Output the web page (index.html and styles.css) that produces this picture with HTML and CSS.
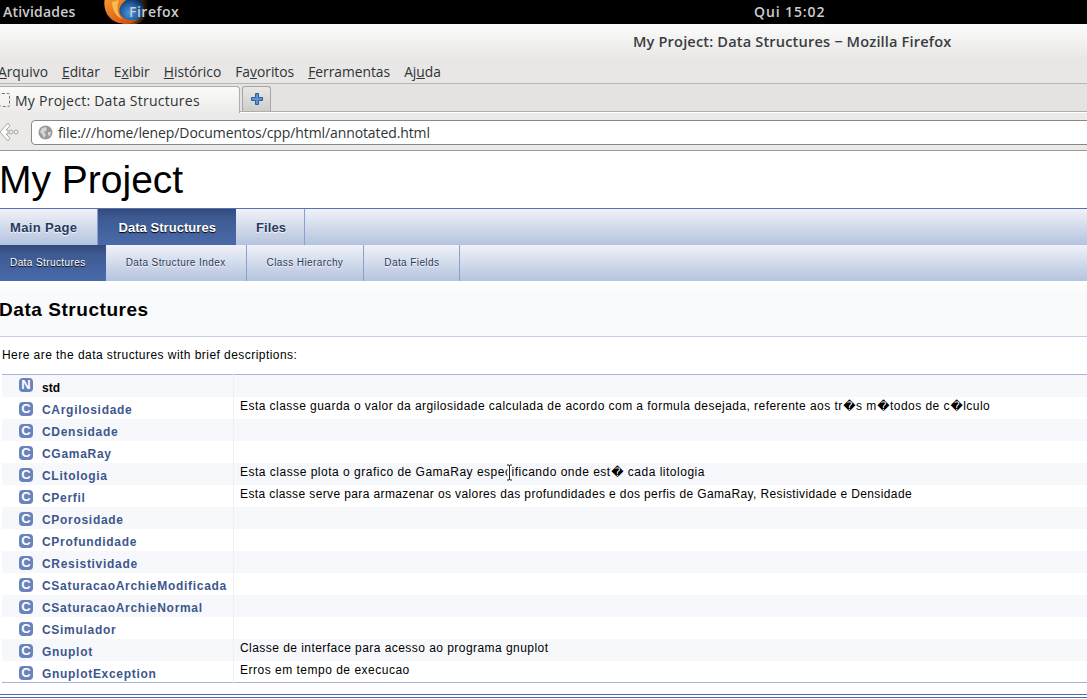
FILE: index.html
```html
<!DOCTYPE html>
<html>
<head>
<meta charset="utf-8">
<title>My Project: Data Structures</title>
<link rel="stylesheet" href="styles.css">
</head>
<body>
	<div class="shell-bar">
		<span class="shell-activities">Atividades</span>
		<span class="shell-app">
			<svg class="fox-icon" width="46" height="24" viewBox="0 0 46 24">
				<defs>
					<radialGradient id="globe" cx="0.45" cy="0.65" r="0.6">
						<stop offset="0" stop-color="#4a9ade"/>
						<stop offset="0.7" stop-color="#1a4f90"/>
						<stop offset="1" stop-color="#0c2748"/>
					</radialGradient>
					<linearGradient id="fade" x1="0" x2="1" y1="0" y2="0">
						<stop offset="0.4" stop-color="#a8651a"/>
						<stop offset="1" stop-color="#000"/>
					</linearGradient>
					<linearGradient id="swirl" x1="0" x2="1" y1="0" y2="1">
						<stop offset="0" stop-color="#f49a2c"/>
						<stop offset="1" stop-color="#d2440f"/>
					</linearGradient>
				</defs>
				<circle cx="26" cy="6" r="19" fill="url(#fade)"/>
				<circle cx="27" cy="9" r="13" fill="url(#globe)"/>
				<path d="M1 -2 C-2 10 5 23 19 23.500 C26 24 31 22 34 19 C26 22 19 19 16 14 C14 9 17 4 22 0 L22 -2Z" fill="url(#swirl)"/>
				<path d="M8 2 C8 10 12 16 18 19 C14 14 12 8 15 0Z" fill="#f6bd4e"/>
			</svg>
			<span class="shell-app-name">Firefox</span>
		</span>
		<span class="shell-clock">Qui 15:02</span>
	</div>
	<div class="title-bar">My Project: Data Structures − Mozilla Firefox</div>
	<div class="menu-bar">
		<span><u>A</u>rquivo</span>
		<span><u>E</u>ditar</span>
		<span>E<u>x</u>ibir</span>
		<span><u>H</u>istórico</span>
		<span>Fa<u>v</u>oritos</span>
		<span><u>F</u>erramentas</span>
		<span>Aj<u>u</u>da</span>
	</div>
	<div class="tab-bar">
		<div class="tab">
			<span class="tab-favicon"></span>
			My Project: Data Structures
		</div>
		<div class="tab-new">
			<svg width="14" height="14" viewBox="0 0 14 14">
				<path d="M5.500 1.500h3v4h4v3h-4v4h-3v-4h-4v-3h4z" fill="#5b93cf" stroke="#2a5f9e"/>
			</svg>
		</div>
	</div>
	<div class="nav-bar">
		<svg class="back-icon" width="20" height="20" viewBox="0 0 20 20">
			<path d="M8 1 L0 10 L8 19 L10 16 L6 12 H8 V8 H6 L10 4Z" fill="#fbfbfa" stroke="#a9a9a6"/>
			<circle cx="11" cy="10" r="2" fill="#f0f0ee" stroke="#a5a5a2"/>
			<circle cx="16" cy="10" r="2" fill="#f0f0ee" stroke="#a5a5a2"/>
		</svg>
		<div class="url-box">
			<svg class="globe" width="15" height="15" viewBox="0 0 15 15">
				<circle cx="7.500" cy="7.500" r="7" fill="#9a9a9a"/>
				<path d="M4 3 L8 2 L9 5 L6 7 L8 10 L6 13 L4 9 L2 7Z M10 7 L13 7 L12 11 L10 10Z" fill="#d6d6d6"/>
			</svg>
			file:///home/lenep/Documentos/cpp/html/annotated.html
		</div>
	</div>

	<div class="project-name">My Project</div>

	<div class="tabs">
		<a class="tabs-item">Main Page</a>
		<a class="tabs-item tabs-current">Data Structures</a>
		<a class="tabs-item tabs-files">Files</a>
	</div>
	<div class="tabs2">
		<a class="tabs2-item tabs2-current">Data Structures</a>
		<a class="tabs2-item">Data Structure Index</a>
		<a class="tabs2-item">Class Hierarchy</a>
		<a class="tabs2-item">Data Fields</a>
	</div>

	<div class="header">
		<h1 class="headertitle">Data Structures</h1>
	</div>

	<div class="contents">
		<p class="intro">Here are the data structures with brief descriptions:</p>
		<table class="directory">
			<tr class="even"><td class="entry"><span class="icon icon-ns">N</span><b class="ns">std</b></td><td class="desc"></td></tr>
			<tr><td class="entry"><span class="icon">C</span><a class="el">CArgilosidade</a></td><td class="desc">Esta classe guarda o valor da argilosidade calculada de acordo com a formula desejada, referente aos tr<i class="bad">�</i>s m<i class="bad">�</i>todos de c<i class="bad">�</i>lculo</td></tr>
			<tr class="even"><td class="entry"><span class="icon">C</span><a class="el">CDensidade</a></td><td class="desc"></td></tr>
			<tr><td class="entry"><span class="icon">C</span><a class="el">CGamaRay</a></td><td class="desc"></td></tr>
			<tr class="even"><td class="entry"><span class="icon">C</span><a class="el">CLitologia</a></td><td class="desc desc-wide">Esta classe plota o grafico de GamaRay espe<span class="cursor-wrap">c<svg class="text-cursor" width="7" height="17" viewBox="0 0 7 17"><path d="M3.500 1v15" fill="none" stroke="#fff" stroke-width="4"/><path d="M1 1h2l.5 1 .5-1h2M3.500 2v13M1 16h2l.5-1 .5 1h2" fill="none" stroke="#222" stroke-width="1"/></svg></span>ificando onde est<i class="bad">�</i> cada litologia</td></tr>
			<tr><td class="entry"><span class="icon">C</span><a class="el">CPerfil</a></td><td class="desc desc-tight">Esta classe serve para armazenar os valores das profundidades e dos perfis de GamaRay, Resistividade e Densidade</td></tr>
			<tr class="even"><td class="entry"><span class="icon">C</span><a class="el">CPorosidade</a></td><td class="desc"></td></tr>
			<tr><td class="entry"><span class="icon">C</span><a class="el">CProfundidade</a></td><td class="desc"></td></tr>
			<tr class="even"><td class="entry"><span class="icon">C</span><a class="el">CResistividade</a></td><td class="desc"></td></tr>
			<tr><td class="entry"><span class="icon">C</span><a class="el">CSaturacaoArchieModificada</a></td><td class="desc"></td></tr>
			<tr class="even"><td class="entry"><span class="icon">C</span><a class="el">CSaturacaoArchieNormal</a></td><td class="desc"></td></tr>
			<tr><td class="entry"><span class="icon">C</span><a class="el">CSimulador</a></td><td class="desc"></td></tr>
			<tr class="even"><td class="entry"><span class="icon">C</span><a class="el">Gnuplot</a></td><td class="desc">Classe de interface para acesso ao programa gnuplot</td></tr>
			<tr><td class="entry"><span class="icon">C</span><a class="el">GnuplotException</a></td><td class="desc desc-wide">Erros em tempo de execucao</td></tr>
		</table>
	</div>
	<div class="footer-line"></div>
</body>
</html>
```

FILE: styles.css
```css
html, body {
	margin: 0;
	padding: 0;
	height: 699px;
	overflow: hidden;
	background: white;
	font-family: "Liberation Sans", sans-serif;
}

/* desktop bars */
.shell-bar {
	height: 24px;
	background: black;
	color: #ccc;
	font-family: "Open Sans", sans-serif;
	font-size: 14px;
	font-weight: 600;
	line-height: 23px;
	display: flex;
	position: relative;
}
.shell-activities {
	margin-left: 3px;
	width: 101px;
	letter-spacing: 0.2px;
}
.shell-app {
	display: flex;
}
.fox-icon {
	flex: none;
}
.shell-app-name {
	margin-left: -21px;
	letter-spacing: 0.5px;
}
.shell-clock {
	position: absolute;
	left: 754px;
	top: 0;
	letter-spacing: 0.9px;
}
.title-bar {
	height: 36px;
	box-sizing: border-box;
	padding-left: 633px;
	padding-top: 7px;
	background: linear-gradient(#fbfbfb, #e8e7e5);
	color: #3a3d40;
	font-family: "Open Sans", sans-serif;
	font-size: 14.6px;
	font-weight: 600;
	letter-spacing: 0.15px;
	line-height: 20px;
}
.menu-bar {
	height: 24px;
	background: #e8e7e5;
	border-bottom: 1px solid #b8b6b2;
	box-sizing: border-box;
	display: flex;
	gap: 14px;
	color: #2e3436;
	font-family: "Open Sans", sans-serif;
	font-size: 13.8px;
	line-height: 23px;
}
.menu-bar span:first-child {
	margin-left: -2px;
}
.tab-bar {
	height: 28px;
	box-sizing: border-box;
	background: #e4e3e1;
	border-bottom: 1px solid #b0aeaa;
	display: flex;
	padding-top: 2px;
}
.tab {
	width: 240px;
	height: 27px;
	box-sizing: border-box;
	background: linear-gradient(#fbfbfa, #ecebe9);
	border: 1px solid #b0aeaa;
	border-left: 0;
	border-bottom: 0;
	border-radius: 0 4px 0 0;
	color: #2e3436;
	font-family: "Open Sans", sans-serif;
	font-size: 14px;
	letter-spacing: 0.25px;
	line-height: 25px;
	display: flex;
	align-items: center;
	gap: 5px;
}
.tab-favicon {
	width: 9px;
	height: 12px;
	border: 1px dashed #777;
	border-left: 0;
	border-radius: 2px;
}
.tab-new {
	width: 29px;
	height: 25px;
	margin-left: 2px;
	box-sizing: border-box;
	background: linear-gradient(#e9e8e6, #cfcdca);
	border: 1px solid #a6a4a0;
	border-bottom: 0;
	border-radius: 3px 3px 0 0;
	display: flex;
	align-items: center;
	justify-content: center;
}
.nav-bar {
	height: 39px;
	box-sizing: border-box;
	background: #ebeae8;
	border-top: 1px solid #fff;
	border-bottom: 1px solid #9a9894;
	display: flex;
	align-items: flex-start;
	padding-top: 7px;
}
.back-icon {
	margin-top: 2px;
	flex: none;
}
.url-box {
	flex: 1;
	margin-left: 11px;
	margin-right: -6px;
	height: 25px;
	box-sizing: border-box;
	background: white;
	border: 1px solid #8a8884;
	border-radius: 4px;
	padding-left: 6px;
	display: flex;
	align-items: center;
	gap: 5px;
	color: #2e3436;
	font-family: "Open Sans", sans-serif;
	font-size: 14px;
	letter-spacing: -0.1px;
}

/* doxygen page */
.project-name {
	height: 57px;
	margin-left: -1px;
	font-size: 39px;
	line-height: 58px;
	color: black;
}
.tabs {
	height: 37px;
	box-sizing: border-box;
	border-top: 1px solid #5373b4;
	background: linear-gradient(#f0f2f8, #b4c3de);
	display: flex;
}
.tabs-item {
	padding: 0 20px 0 10px;
	line-height: 37px;
	font-size: 13px;
	font-weight: bold;
	letter-spacing: 0.35px;
	color: #283a5d;
	border-right: 1px solid #8ba0cc;
	text-shadow: 0 1px 1px rgba(255,255,255,0.9);
}
.tabs-item + .tabs-item {
	padding: 0 20px;
}
.tabs-current {
	background: linear-gradient(#34497a 0, #3d5a92 25%, #4a6aaa 100%);
	color: white;
	border-right: 0;
	letter-spacing: 0.05px;
	text-shadow: 0 1px 1px rgba(0,0,0,1);
}
.tabs-item.tabs-files {
	padding-right: 18px;
	letter-spacing: 0.1px;
}
.tabs2 {
	height: 36px;
	background: linear-gradient(#f0f2f8, #b4c3de);
	display: flex;
}
.tabs2-item {
	padding: 0 20px;
	line-height: 36px;
	font-size: 10px;
	letter-spacing: 0.41px;
	color: #283a5d;
	border-right: 1px solid #8ba0cc;
	text-shadow: 0 1px 1px rgba(255,255,255,0.9);
}
.tabs2-current {
	padding: 0 20px 0 10px;
	background: linear-gradient(#34497a 0, #3d5a92 25%, #4a6aaa 100%);
	color: white;
	border-right: 0;
	text-shadow: 0 1px 1px rgba(0,0,0,1);
}
.header {
	height: 56px;
	box-sizing: border-box;
	background: linear-gradient(#fff, #f9fafc 12px);
	border-bottom: 1px solid #c4cfe5;
}
.headertitle {
	margin: 0 0 0 -1px;
	font-size: 19px;
	line-height: 57px;
	font-weight: bold;
	letter-spacing: 0.55px;
	color: black;
}
.contents {
	padding: 0 0 0 2px;
}
.intro {
	margin: 0;
	height: 37px;
	padding-top: 11px;
	box-sizing: border-box;
	font-size: 12px;
	line-height: 14px;
	letter-spacing: 0.45px;
}
.directory {
	width: 100%;
	border-collapse: collapse;
	border-top: 1px solid #a3b4d7;
	border-bottom: 1px solid #a3b4d7;
}
.directory tr {
	height: 22px;
}
.directory tr.even {
	background: #f7f8fb;
}
.directory td {
	padding: 0;
}
.directory .entry {
	width: 231px;
	white-space: nowrap;
	vertical-align: top;
	border-right: 1px solid #eef0f5;
	font-size: 12px;
	line-height: 14px;
	padding-top: 6px;
}
.icon {
	display: inline-block;
	width: 14px;
	height: 14px;
	margin: -1px 9px 0 17px;
	vertical-align: top;
	background: #6a83bd;
	border-radius: 4px;
	color: white;
	font-size: 13px;
	font-weight: bold;
	line-height: 14px;
	text-align: center;
}
.icon.icon-ns {
	margin-top: -3px;
}
.el {
	color: #3d578c;
	font-weight: bold;
	letter-spacing: 0.7px;
}
.ns {
	font-weight: bold;
}
.directory .desc {
	padding-left: 6px;
	padding-top: 1px;
	vertical-align: top;
	font-size: 12px;
	line-height: 17px;
	letter-spacing: 0.45px;
}
.directory .desc-wide {
	letter-spacing: 0.5px;
}
.directory .desc-tight {
	letter-spacing: 0.38px;
}
.bad {
	font-style: normal;
	font-family: "DejaVu Sans", sans-serif;
	letter-spacing: 0;
	margin: 0 0.5px;
}
.cursor-wrap {
	position: relative;
}
.text-cursor {
	position: absolute;
	left: 1px;
	top: -1px;
}
.footer-line {
	margin-top: 11px;
	height: 2px;
	border-top: 1px solid #4a6aaa;
	border-bottom: 1px solid #4a6aaa;
}
```
